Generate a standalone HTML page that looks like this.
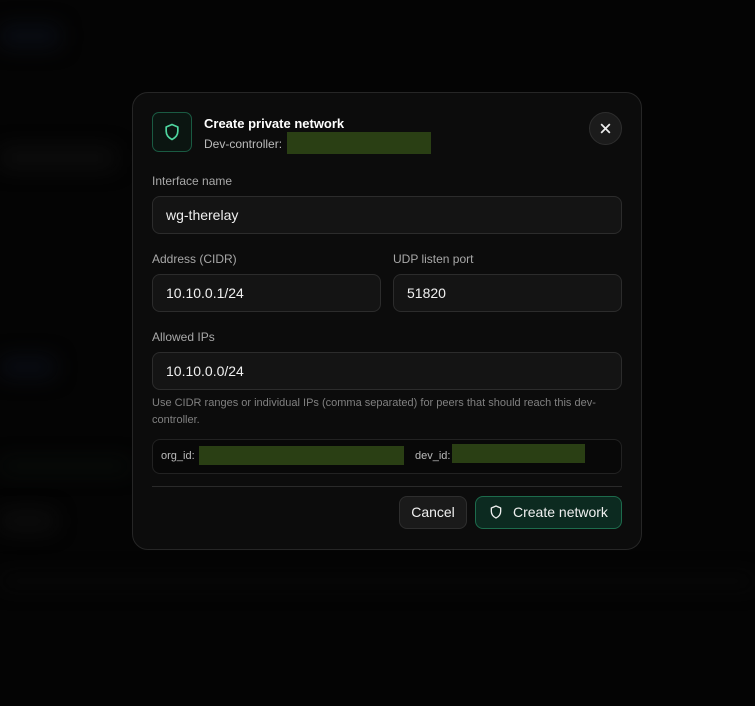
<!DOCTYPE html>
<html><head><meta charset="utf-8"><style>
*{box-sizing:border-box;margin:0;padding:0}
body{width:755px;height:706px;background:#040404;font-family:"Liberation Sans",sans-serif;position:relative;overflow:hidden}
.bg{position:absolute;filter:blur(10px);border-radius:6px}
.m{position:absolute;left:132px;top:92px;width:510px;height:458px;background:#0c0c0c;border:1px solid #262626;border-radius:16px}
.a{position:absolute}
.lbl{position:absolute;font-size:12px;color:#a8a8a8}
.inp{position:absolute;height:38px;background:#141414;border:1px solid #2c2c2c;border-radius:8px;color:#f0f0f0;font-size:14px;padding-left:13px;line-height:36px}
.g{position:absolute;background:#2a3f14}
</style></head><body>
<div class="bg" style="left:0;top:25px;width:60px;height:22px;background:#090c14"></div>
<div class="bg" style="left:0;top:148px;width:115px;height:20px;background:#0d0d0d"></div>
<div class="bg" style="left:0;top:357px;width:55px;height:20px;background:#090c14"></div>
<div class="bg" style="left:0;top:460px;width:130px;height:12px;background:#080d0a"></div>
<div class="bg" style="left:0;top:512px;width:55px;height:18px;background:#0d0d0d"></div>
<div class="bg" style="left:0;top:575px;width:755px;height:12px;background:#080808"></div>
<div class="m"></div>
<div class="a" style="left:152px;top:112px;width:40px;height:40px;border:1px solid #1a5a42;border-radius:7px;background:#0b1511"></div>
<svg class="a" style="left:162px;top:122px" width="20" height="20" viewBox="0 0 24 24" fill="none" stroke="#4fd6a0" stroke-width="2" stroke-linejoin="round"><path d="M12 3l7 3v5c0 5-3 8-7 10-4-2-7-5-7-10V6z"/></svg>
<div class="a" style="left:204px;top:116px;font-size:13px;font-weight:bold;color:#fff">Create private network</div>
<div class="a" style="left:204px;top:137px;font-size:12px;color:#bbb">Dev-controller:</div>
<div class="g" style="left:287px;top:132px;width:144px;height:22px"></div>
<div class="a" style="left:589px;top:112px;width:33px;height:33px;border-radius:50%;background:#1b1b1b;border:1px solid #2e2e2e"></div>
<svg class="a" style="left:599px;top:122px" width="13" height="13" viewBox="0 0 12 12" stroke="#eee" stroke-width="1.6"><path d="M2 2l8 8M10 2l-8 8"/></svg>
<div class="lbl" style="left:152px;top:174px">Interface name</div>
<div class="inp" style="left:152px;top:196px;width:470px">wg-therelay</div>
<div class="lbl" style="left:152px;top:252px">Address (CIDR)</div>
<div class="lbl" style="left:393px;top:252px">UDP listen port</div>
<div class="inp" style="left:152px;top:274px;width:229px">10.10.0.1/24</div>
<div class="inp" style="left:393px;top:274px;width:229px">51820</div>
<div class="lbl" style="left:152px;top:330px">Allowed IPs</div>
<div class="inp" style="left:152px;top:352px;width:470px">10.10.0.0/24</div>
<div class="a" style="left:152px;top:395px;width:470px;font-size:11px;line-height:17px;color:#808080">Use CIDR ranges or individual IPs (comma separated) for peers that should reach this dev-controller.</div>
<div class="a" style="left:152px;top:439px;width:470px;height:35px;border:1px solid #222;border-radius:8px;background:#080808"></div>
<div class="a" style="left:161px;top:450px;font-size:11px;color:#bbb">org_id:</div>
<div class="g" style="left:199px;top:446px;width:205px;height:19px"></div>
<div class="a" style="left:415px;top:450px;font-size:11px;color:#bbb">dev_id:</div>
<div class="g" style="left:452px;top:444px;width:133px;height:19px"></div>
<div class="a" style="left:152px;top:486px;width:470px;height:1px;background:#2a2a2a"></div>
<div class="a" style="left:399px;top:496px;width:68px;height:33px;border-radius:8px;background:#1a1a1a;border:1px solid #2e2e2e;color:#f0f0f0;font-size:14px;text-align:center;line-height:31px">Cancel</div>
<div class="a" style="left:475px;top:496px;width:147px;height:33px;border-radius:8px;background:#0c2a20;border:1px solid #1d6b4c;color:#f0f0f0;font-size:14px;line-height:31px;padding-left:37px">Create network</div>
<svg class="a" style="left:488px;top:504px" width="16" height="16" viewBox="0 0 24 24" fill="none" stroke="#eee" stroke-width="2" stroke-linejoin="round"><path d="M12 3l7 3v5c0 5-3 8-7 10-4-2-7-5-7-10V6z"/></svg>
</body></html>
